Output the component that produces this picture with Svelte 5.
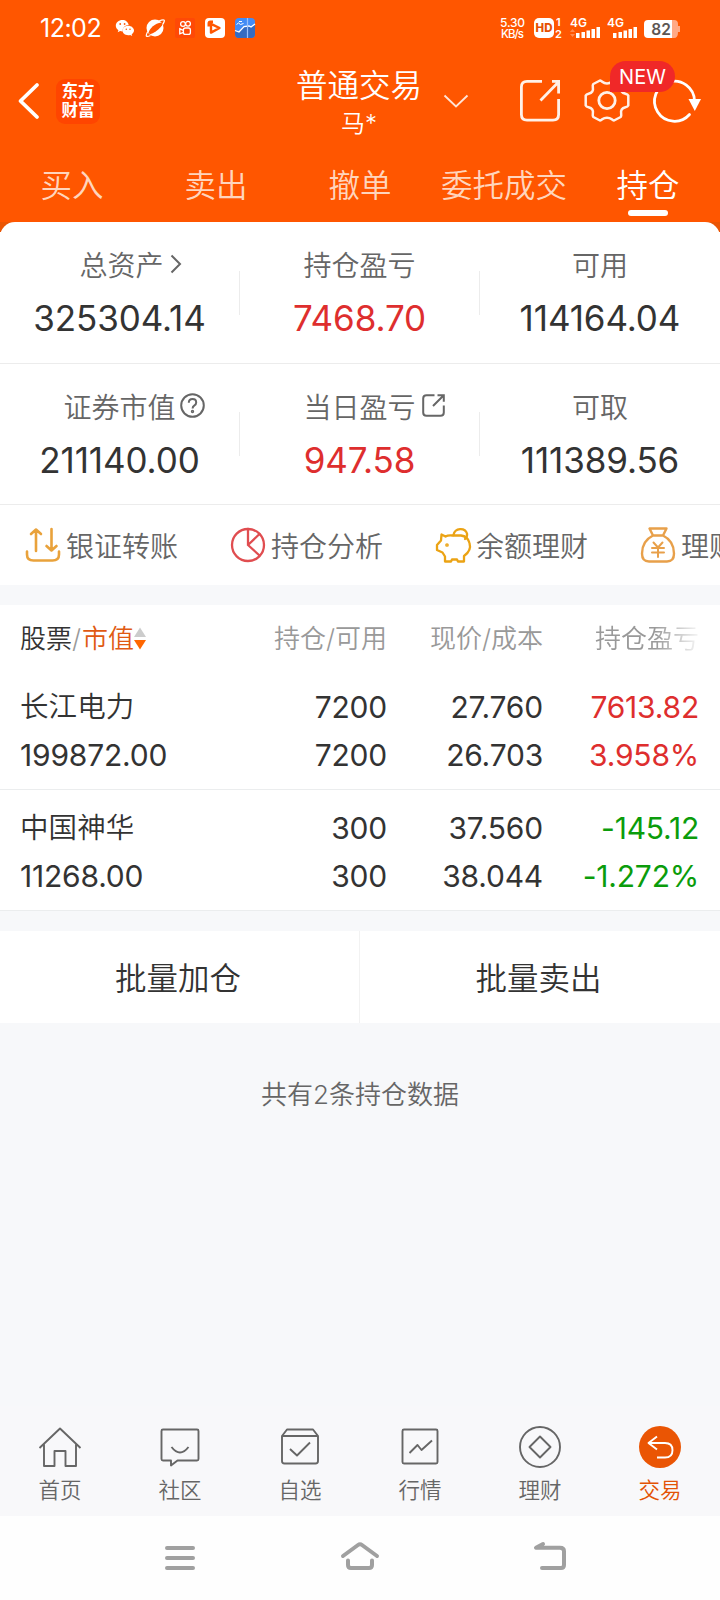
<script>
	const tabs = ['买入', '卖出', '撤单', '委托成交', '持仓'];
	let activeTab = $state('持仓');

	const summary = [
		[
			{ label: '总资产', value: '325304.14', icon: 'chevron' },
			{ label: '持仓盈亏', value: '7468.70', up: true },
			{ label: '可用', value: '114164.04' }
		],
		[
			{ label: '证券市值', value: '211140.00', icon: 'help' },
			{ label: '当日盈亏', value: '947.58', up: true, icon: 'open' },
			{ label: '可取', value: '111389.56' }
		]
	];

	const actions = [
		{ label: '银证转账', icon: 'transfer' },
		{ label: '持仓分析', icon: 'pie' },
		{ label: '余额理财', icon: 'piggy' },
		{ label: '理财', icon: 'bag' }
	];

	const holdings = [
		{ name: '长江电力', worth: '199872.00', held: 7200, free: 7200, price: '27.760', cost: '26.703', profit: '7613.82', rate: '3.958%' },
		{ name: '中国神华', worth: '11268.00', held: 300, free: 300, price: '37.560', cost: '38.044', profit: '-145.12', rate: '-1.272%' }
	];

	const nav = [
		{ label: '首页', icon: 'home' },
		{ label: '社区', icon: 'chat' },
		{ label: '自选', icon: 'check' },
		{ label: '行情', icon: 'chart' },
		{ label: '理财', icon: 'coin' },
		{ label: '交易', icon: 'trade' }
	];
	let activeNav = $state('交易');
</script>

<div class="app">
	<div class="top">
		<div class="status">
			<span class="time">12:02</span>
			<div class="notices">
				<svg width="20" height="20" viewBox="0 0 20 20">
					<path fill="#fff" d="M7.500 2C3.600 2 .8 4.500 .8 7.700c0 1.900 1 3.400 2.600 4.500l-.7 2 2.400-1.200c.8.200 1.500.4 2.500.4a5.800 5.800 0 0 1 6.100-6.300C13.200 4.100 10.700 2 7.500 2z" />
					<path fill="#fff" d="M13.200 7.800c-3.400 0-5.700 2.200-5.700 4.800s2.400 4.700 5.700 4.700c.7 0 1.300-.1 2-.3l2 1-.5-1.700c1.400-1 2.300-2.200 2.300-3.700 0-2.600-2.600-4.800-5.800-4.800z" />
					<g fill="#ff5a0a"><circle cx="5.200" cy="6" r=".9" /><circle cx="9.600" cy="6" r=".9" /><circle cx="11.300" cy="11.200" r=".8" /><circle cx="15" cy="11.200" r=".8" /></g>
				</svg>
				<svg width="20" height="20" viewBox="0 0 20 20">
					<circle cx="10" cy="10" r="8.500" fill="#fff" />
					<path fill="#ff5600" d="M3.500 14.800C5 10 9.500 5.500 16.500 4.500c1.500.8 1 2.200-.3 4C13 12.500 8.500 15.500 5 16.300z" />
					<path fill="none" stroke="#fff" stroke-width="1.300" d="M2.800 13.500C-.5 19.500 2 19 5.500 17.500M14 3c6-2.500 6.500-.8 3.800 3.300" />
				</svg>
				<svg width="20" height="20" viewBox="0 0 20 20">
					<rect width="20" height="20" rx="2" fill="#ff4906" />
					<g fill="none" stroke="#fff" stroke-width="1.300"><circle cx="8" cy="6" r="2.400" /><circle cx="13" cy="5.800" r="2.400" /><rect x="8.400" y="10" width="7" height="6.400" rx="2" /><path d="M8.400 12.300l-3.600-1.500v5l3.600-1.500" /></g>
				</svg>
				<svg width="20" height="20" viewBox="0 0 20 20">
					<rect width="20" height="20" rx="4" fill="#fff" />
					<path fill="none" stroke="#ff5600" stroke-width="2.400" stroke-linejoin="round" d="M6 5.800L14.500 10 6 14.600zM3.700 8.500V5.500q0-1.800 1.800-1.800H8" />
				</svg>
				<svg width="20" height="20" viewBox="0 0 20 20">
					<rect width="20" height="20" rx="4" fill="#438cf5" />
					<path fill="#356bc0" d="M0 13l4 1 5-5 4-1 3 1 4-3v10q0 4-4 4H4q-4 0-4-4z" />
					<path fill="none" stroke="#fff" stroke-width="1.300" d="M0 12.500l4 1.500 5-5.500 5-.5 2 1 4-3" />
					<path fill="none" stroke="#fff" stroke-width="1" d="M1.500 6.500l2-1.500 2 1.500 3-1M4 3.500h3" />
					<path stroke="#9ac0fa" stroke-width="1.200" d="M12.500 0v20" />
				</svg>
			</div>
			<div class="signals">
				<svg width="27" height="20" viewBox="0 0 27 20">
					<text x="0" y="9.200" font-size="12" font-weight="500" fill="#fff" textLength="25">5.30</text>
					<text x="1" y="19.500" font-size="11.500" font-weight="500" fill="#fff" textLength="23">KB/s</text>
				</svg>
				<svg width="29" height="20" viewBox="0 0 29 20">
					<rect width="20" height="20" rx="5" fill="#fff" />
					<text x="10" y="14" text-anchor="middle" font-size="11.500" font-weight="800" fill="#e65000">HD</text>
					<text x="22" y="8" font-size="11" font-weight="600" fill="#fff">1</text>
					<text x="21" y="19.500" font-size="11" font-weight="600" fill="#fff">2</text>
				</svg>
				<svg width="30" height="20" viewBox="0 0 30 20">
					<text x="0" y="9" font-size="12" font-weight="600" fill="#fff">4G</text>
					<path fill="#ff8b50" d="M0 14l2.500-3L5 14zM0 16h5l-2.500 3z" />
					<path fill="#fff" d="M6 15h3.500v5H6zM11.500 14H15v6h-3.500zM16.500 12.500H20V20h-3.500zM21.500 11H25v9h-3.500zM26.500 9H30v11h-3.500z" />
				</svg>
				<svg width="30" height="20" viewBox="0 0 30 20">
					<text x="0" y="9" font-size="12" font-weight="600" fill="#fff">4G</text>
					<path fill="#fff" d="M6 15h3.500v5H6zM11.500 14H15v6h-3.500zM16.500 12.500H20V20h-3.500zM21.500 11H25v9h-3.500zM26.500 9H30v11h-3.500z" />
				</svg>
				<svg width="36" height="20" viewBox="0 0 36 20">
					<path fill="#ffa985" d="M25 2h5q4 0 4 4v2h2v6h-2q0 6-4 6h-5z" />
					<path fill="#fff" d="M4 2h24v18H4q-4 0-4-4V6q0-4 4-4z" />
					<text x="17" y="16.500" text-anchor="middle" font-size="15.500" font-weight="600" fill="#5d5652">82</text>
				</svg>
			</div>
		</div>

		<header>
			<div class="left">
				<svg width="22" height="36" viewBox="0 0 22 36"><path fill="none" stroke="#fff" stroke-width="3.800" stroke-linecap="round" stroke-linejoin="round" d="M19 2L2.500 18 19 34" /></svg>
				<div class="logo"><span>东方</span><span>财富</span></div>
			</div>
			<div class="title">
				<h1>普通交易</h1>
				<p>马*</p>
			</div>
			<div class="tools">
				<svg class="more" width="26" height="15" viewBox="0 0 26 15"><path fill="none" stroke="#ffe4d6" stroke-width="1.900" d="M1.500 1.500L13 12.500l11.500-11" /></svg>
				<svg width="42" height="46" viewBox="0 0 42 46"><path fill="none" stroke="#fff1e8" stroke-width="2.800" d="M23 3.400H8Q2.400 3.400 2.400 9v27.500q0 5.600 5.600 5.600h26q5.600 0 5.600-5.600V21M21.500 22.500L39 4.500M33 3.400h6.600V15.500" /></svg>
				<div class="gear">
					<svg width="46" height="46" viewBox="0 0 46 46">
						<path fill="none" stroke="#fff1e8" stroke-width="2.500" stroke-linejoin="round" d="M16 2.500C18.500 3 18.500 5.500 23 5.500S27.500 3 30 2.500L36.700 6C38.500 8 35.700 10.500 37.700 13.500 39.700 16.500 43 15 44.300 17.500V27.500C43 30 39.700 28.500 37.700 31.500 35.700 34.500 38.500 37 36.700 39L30 42.500C27.500 42 27.500 39.700 23 39.700S18.500 42 16 42.500L9.300 39C7.500 37 10.300 34.500 8.300 31.500 6.300 28.500 3 30 1.700 27.500V17.500C3 15 6.300 16.500 8.300 13.500 10.300 10.500 7.500 8 9.300 6z" />
						<circle cx="23" cy="22.500" r="8.200" fill="none" stroke="#fff1e8" stroke-width="2.800" />
					</svg>
					<span class="badge">NEW</span>
				</div>
				<svg width="48" height="46" viewBox="0 0 48 46">
					<path fill="none" stroke="#fff" stroke-width="2.800" stroke-linecap="round" d="M36.500 36.500A20 20 0 1 1 41.500 23" />
					<path fill="#fff" d="M35.500 21H48l-6.200 12z" />
				</svg>
			</div>
		</header>

		<div class="tabs">
			{#each tabs as tab}
				<button class:active={tab === activeTab} onclick={() => (activeTab = tab)}>{tab}</button>
			{/each}
		</div>
	</div>

	<div class="backdrop">
		<section class="summary">
			{#each summary as row}
				<div class="row">
					{#each row as cell}
						<div class="cell">
							<div class="label">
								{cell.label}
								{#if cell.icon === 'chevron'}
									<svg class="tail near" width="12" height="20" viewBox="0 0 12 20"><path d="M1.500 1.500L10 10l-8.500 8.500" /></svg>
								{:else if cell.icon === 'help'}
									<svg class="tail help" width="25" height="25" viewBox="0 0 25 25"><circle cx="12.500" cy="12.500" r="11.300" /><path d="M8.800 9.800q0-3.800 3.700-3.800t3.700 3.400q0 2-2 3.200-1.600 1-1.600 3" /><circle cx="12.500" cy="18.500" r=".7" /></svg>
								{:else if cell.icon === 'open'}
									<svg class="tail" width="23" height="23" viewBox="0 0 23 23"><path d="M12.500 1.200H4.500Q1.200 1.200 1.200 4.500v14q0 3.300 3.300 3.300h14q3.300 0 3.300-3.300v-7M11 12L21.500 1.500M15.500 1.200h6.300v6.500" /></svg>
								{/if}
							</div>
							<div class="value" class:up={cell.up}>{cell.value}</div>
						</div>
					{/each}
				</div>
			{/each}
		</section>
	</div>

	<div class="actions">
		{#each actions as action}
			<div class="action">
				<svg width="36" height="36" viewBox="0 0 36 36">
					{#if action.icon === 'transfer'}
						<g stroke="#e9a23b" stroke-width="2.600"><path d="M2 24.500v3q0 6 6.500 6h19q6.500 0 6.500-6v-3M11 24V3M6 7L11 2.500 16 7M26.500 2v21M21.500 19l5 4.500 5-4.500" /></g>
					{:else if action.icon === 'pie'}
						<g stroke="#e04d50" stroke-width="2.300"><circle cx="18" cy="18" r="16" /><path d="M18 2v16l11.500 10.500M18 18L29.500 7" /></g>
					{:else if action.icon === 'piggy'}
						<g stroke="#eba314" stroke-width="2.300"><path d="M17.500 8.500Q13 8 10.500 9.500L6.500 7.500 6 13.500 2 18v5l5.500 2.500L10 29.500v5h6l1-2h5l1 2h6V29c5-3.500 7-8 5.500-13-1.200-4.500-4.500-7-8.500-7.500z" /><path d="M18.500 8C20 .5 30 .5 32 6.500c.5 2.500-.5 4-2 5.500" /><circle cx="12" cy="18" r=".7" /></g>
					{:else}
						<g stroke="#e8a04a" stroke-width="2.400"><path d="M13 8.500L9.500 1.500h17L23 8.500zM13 8.500C6 12 2 18.500 2 26.500q0 8 7 8h18q7 0 7-8C34 18.500 30 12 23 8.500" /><path stroke-width="2" d="M13.500 15.500L18 20.500l4.500-5M18 20.500V30M12 21h12M12 25.500h12" /></g>
					{/if}
				</svg>
				<span>{action.label}</span>
			</div>
		{/each}
	</div>

	<section class="holdings">
		<div class="line head">
			<div class="sort">
				<b>股票</b>/<i>市值</i>
				<svg width="12" height="24" viewBox="0 0 12 24"><path fill="#ccc" d="M0 10L6 .5l6 9.500z" /><path fill="#f60" d="M0 13h12L6 22.500z" /></svg>
			</div>
			<div>持仓/可用</div>
			<div>现价/成本</div>
			<div class="fade">持仓盈亏</div>
		</div>
		{#each holdings as h}
			<div class="line stock">
				<div><span class="name">{h.name}</span><span>{h.worth}</span></div>
				<div><span>{h.held}</span><span>{h.free}</span></div>
				<div><span>{h.price}</span><span>{h.cost}</span></div>
				<div class={h.profit.startsWith('-') ? 'down' : 'up'}><span>{h.profit}</span><span>{h.rate}</span></div>
			</div>
		{/each}
	</section>

	<div class="batch">
		<button>批量加仓</button>
		<button>批量卖出</button>
	</div>

	<p class="count">共有{holdings.length}条持仓数据</p>

	<nav>
		{#each nav as item}
			<button class:active={item.label === activeNav} onclick={() => (activeNav = item.label)}>
				<svg width="44" height="44" viewBox="0 0 44 44">
					{#if item.icon === 'home'}
						<path d="M1.500 22L22 2.500 42.500 22M6 18.500V40h10.500V25h11v15H38V18.500" />
					{:else if item.icon === 'chat'}
						<path d="M5 3.500h34q1.500 0 1.500 1.500v28q0 1.500-1.500 1.500H19.500L13 39.500v-5H5q-1.500 0-1.500-1.500V5q0-1.500 1.500-1.500zM13.500 21q8.500 11 17 0" />
					{:else if item.icon === 'check'}
						<path d="M4 10l5-6.500h26L40 10M4 10h36v25q0 2.500-2.500 2.500h-31Q4 37.500 4 35zM12 23l7 6.500L32 16.500" />
					{:else if item.icon === 'chart'}
						<path d="M6 3.500h32q1.500 0 1.500 1.500v31q0 1.500-1.500 1.500H6q-1.500 0-1.500-1.500V5q0-1.500 1.500-1.500zM11.500 27l8-8 4 5L34 14.500" />
					{:else if item.icon === 'coin'}
						<path d="M22 10.500L32.500 21 22 31.500 11.500 21z" /><circle cx="22" cy="21" r="20" />
					{:else}
						<circle class="disc" cx="22" cy="21" r="21" /><path class="arrow" d="M19 10.500L10.500 17l8.500 6.500M11 17h16q7.500 0 7.500 7.200T27 31.500h-8" />
					{/if}
				</svg>
				<span>{item.label}</span>
			</button>
		{/each}
	</nav>

	<div class="system">
		<svg width="40" height="32" viewBox="0 0 40 32"><path d="M7 6h26M7 16h26M7 26h26" /></svg>
		<svg width="40" height="32" viewBox="0 0 40 32"><path d="M3 14L18 3q2-1.500 4 0l15 11M8 18.500V23q0 3 3 3h18q3 0 3-3v-4.500" /></svg>
		<svg width="40" height="32" viewBox="0 0 40 32"><path d="M13 2L6 5.700h24q4 0 4 3.500V23q0 3-3 3H12" /></svg>
	</div>
</div>

<style>
	:global(body) {
		margin: 0;
		background: #f7f8fa;
	}

	.app {
		width: 720px;
		height: 1600px;
		display: flex;
		flex-direction: column;
		overflow: hidden;
		background: #f7f8fa;
		color: #333;
		font-family: Inter, 'Noto Sans CJK SC', sans-serif;
		font-weight: 350;
	}

	svg {
		display: block;
		flex: none;
		overflow: visible;
	}

	button {
		padding: 0;
		border: 0;
		background: none;
		color: inherit;
		font: inherit;
	}

	h1,
	p {
		margin: 0;
		font-weight: inherit;
	}

	.top {
		height: 222px;
		background: #ff5600;
		color: #fff;
	}

	.status {
		height: 56px;
		box-sizing: border-box;
		padding: 0 40px;
		display: flex;
		align-items: center;
	}

	.time {
		width: 75px;
		font-size: 25px;
		font-weight: 400;
		letter-spacing: -0.5px;
	}

	.notices,
	.signals {
		display: flex;
		gap: 10px;
	}

	.signals {
		margin-left: auto;
		gap: 7px;
	}

	header {
		height: 90px;
		display: grid;
		grid-template-columns: 290px 138px 292px;
		align-items: center;
	}

	.left {
		display: flex;
		align-items: center;
		gap: 16px;
		padding-left: 18px;
	}

	.logo {
		width: 44px;
		height: 45px;
		border-radius: 9px;
		background: #ff4500;
		display: flex;
		flex-direction: column;
		align-items: center;
		justify-content: center;
		font-size: 16.5px;
		font-weight: 700;
		line-height: 19.5px;
	}

	.title {
		padding-top: 3px;
		text-align: center;
	}

	h1 {
		font-size: 31.5px;
		line-height: 42px;
	}

	.title p {
		font-size: 24px;
		line-height: 34px;
	}

	.tools {
		display: flex;
		align-items: center;
		gap: 23px;
		padding: 0 19px 0 15px;
	}

	.more {
		margin-right: auto;
	}

	.gear {
		position: relative;
	}

	.badge {
		position: absolute;
		left: 26px;
		top: -17px;
		width: 65px;
		height: 31px;
		border-radius: 16px 16px 16px 0;
		background: #f02828;
		font-size: 20px;
		font-weight: 400;
		line-height: 32px;
		text-align: center;
	}

	.tabs {
		height: 76px;
		display: grid;
		grid-template-columns: repeat(5, 1fr);
	}

	.tabs button {
		display: flex;
		flex-direction: column;
		align-items: center;
		padding-top: 17px;
		font-size: 31.5px;
		line-height: 46px;
		color: #ffd5bd;
	}

	.tabs .active {
		color: #fff;
	}

	.tabs .active::after {
		content: '';
		width: 40px;
		height: 6px;
		margin-top: 1px;
		border-radius: 3px;
		background: #fff;
	}

	.backdrop {
		background: linear-gradient(#ea5504 10px, #fff 10px);
	}

	.summary {
		border-radius: 15px 15px 0 0;
		background: #fff;
	}

	.row {
		height: 141px;
		box-sizing: border-box;
		display: grid;
		grid-template-columns: repeat(3, 1fr);
		align-items: center;
		border-bottom: 1px solid #ececec;
	}

	.row:first-child {
		height: 142px;
	}

	.cell {
		height: 44px;
		box-sizing: border-box;
		padding-top: 5px;
		display: flex;
		flex-direction: column;
		align-items: center;
		justify-content: center;
		border-right: 1px solid #ececec;
	}

	.cell:last-child {
		border: 0;
	}

	.label {
		display: flex;
		align-items: center;
		font-size: 28px;
		line-height: 46px;
		color: #666;
	}

	.tail {
		margin: 0 -29px 4px 6px;
		fill: none;
		stroke: #666;
		stroke-width: 2;
	}

	.near {
		margin-right: -22px;
	}

	.help {
		margin: 0 -29px 4px 4px;
	}

	.value {
		font-size: 35px;
		font-weight: 400;
		line-height: 58px;
		letter-spacing: -0.1px;
	}

	.up {
		color: #de2e2e;
	}

	.down {
		color: #0b9c0b;
	}

	.actions {
		height: 80px;
		display: grid;
		grid-template-columns: repeat(4, 205px);
		padding-left: 25px;
		background: #fff;
		overflow: hidden;
	}

	.action {
		display: flex;
		align-items: center;
		gap: 5px;
		font-size: 28px;
		color: #666;
		white-space: nowrap;
	}

	.action svg {
		fill: none;
		stroke-linecap: round;
		stroke-linejoin: round;
	}

	.holdings {
		margin: 20px 0;
		background: #fff;
	}

	.line {
		display: grid;
		grid-template-columns: 211px repeat(3, 156px);
		padding: 0 20px;
		text-align: right;
	}

	.line > div:first-child {
		text-align: left;
	}

	.head {
		height: 64px;
		font-size: 26px;
		line-height: 67px;
		color: #999;
	}

	.sort {
		display: flex;
		align-items: center;
	}

	.sort b {
		font-weight: inherit;
		color: #333;
	}

	.sort i {
		margin-left: 1px;
		font-style: normal;
		color: #e05a12;
	}

	.fade {
		mask-image: linear-gradient(to right, #000 112px, transparent 160px);
	}

	.stock {
		height: 121px;
		box-sizing: border-box;
		padding-top: 14px;
		border-bottom: 1px solid #ebedee;
		font-size: 30px;
		font-weight: 400;
		line-height: 48px;
		letter-spacing: -0.2px;
	}

	.stock span {
		display: block;
	}

	.stock .name {
		font-size: 28.5px;
		font-weight: 350;
		letter-spacing: 0.1px;
	}

	.batch {
		height: 92px;
		display: grid;
		grid-template-columns: 1fr 1fr;
		background: #fff;
		font-size: 31.5px;
	}

	.batch button {
		padding: 0 3px 2px 0;
		border-right: 1px solid #f2f2f2;
	}

	.batch button + button {
		border: 0;
	}

	.count {
		margin-top: 47px;
		font-size: 26px;
		line-height: 50px;
		text-align: center;
		color: #666;
	}

	nav {
		height: 110px;
		box-sizing: border-box;
		margin-top: auto;
		padding-top: 20px;
		display: grid;
		grid-template-columns: repeat(6, 1fr);
		background: #f8f8fa;
		color: #666;
	}

	nav button {
		display: flex;
		flex-direction: column;
		align-items: center;
		font-size: 21.5px;
		line-height: 40px;
	}

	nav svg {
		fill: none;
		stroke: #666;
		stroke-width: 1.9;
		stroke-linejoin: round;
	}

	nav .active {
		color: #e35305;
	}

	.disc {
		fill: #ea5504;
		stroke: none;
	}

	.arrow {
		stroke: #fff;
	}

	.system {
		height: 84px;
		display: grid;
		grid-template-columns: 40px 40px 40px;
		gap: 140px 140px;
		justify-content: center;
		align-items: center;
		background: #fefefe;
	}

	.system svg:last-child {
		margin-left: 10px;
	}

	.system svg {
		fill: none;
		stroke: #a0a0a0;
		stroke-width: 4;
		stroke-linecap: round;
		stroke-linejoin: round;
	}
</style>
